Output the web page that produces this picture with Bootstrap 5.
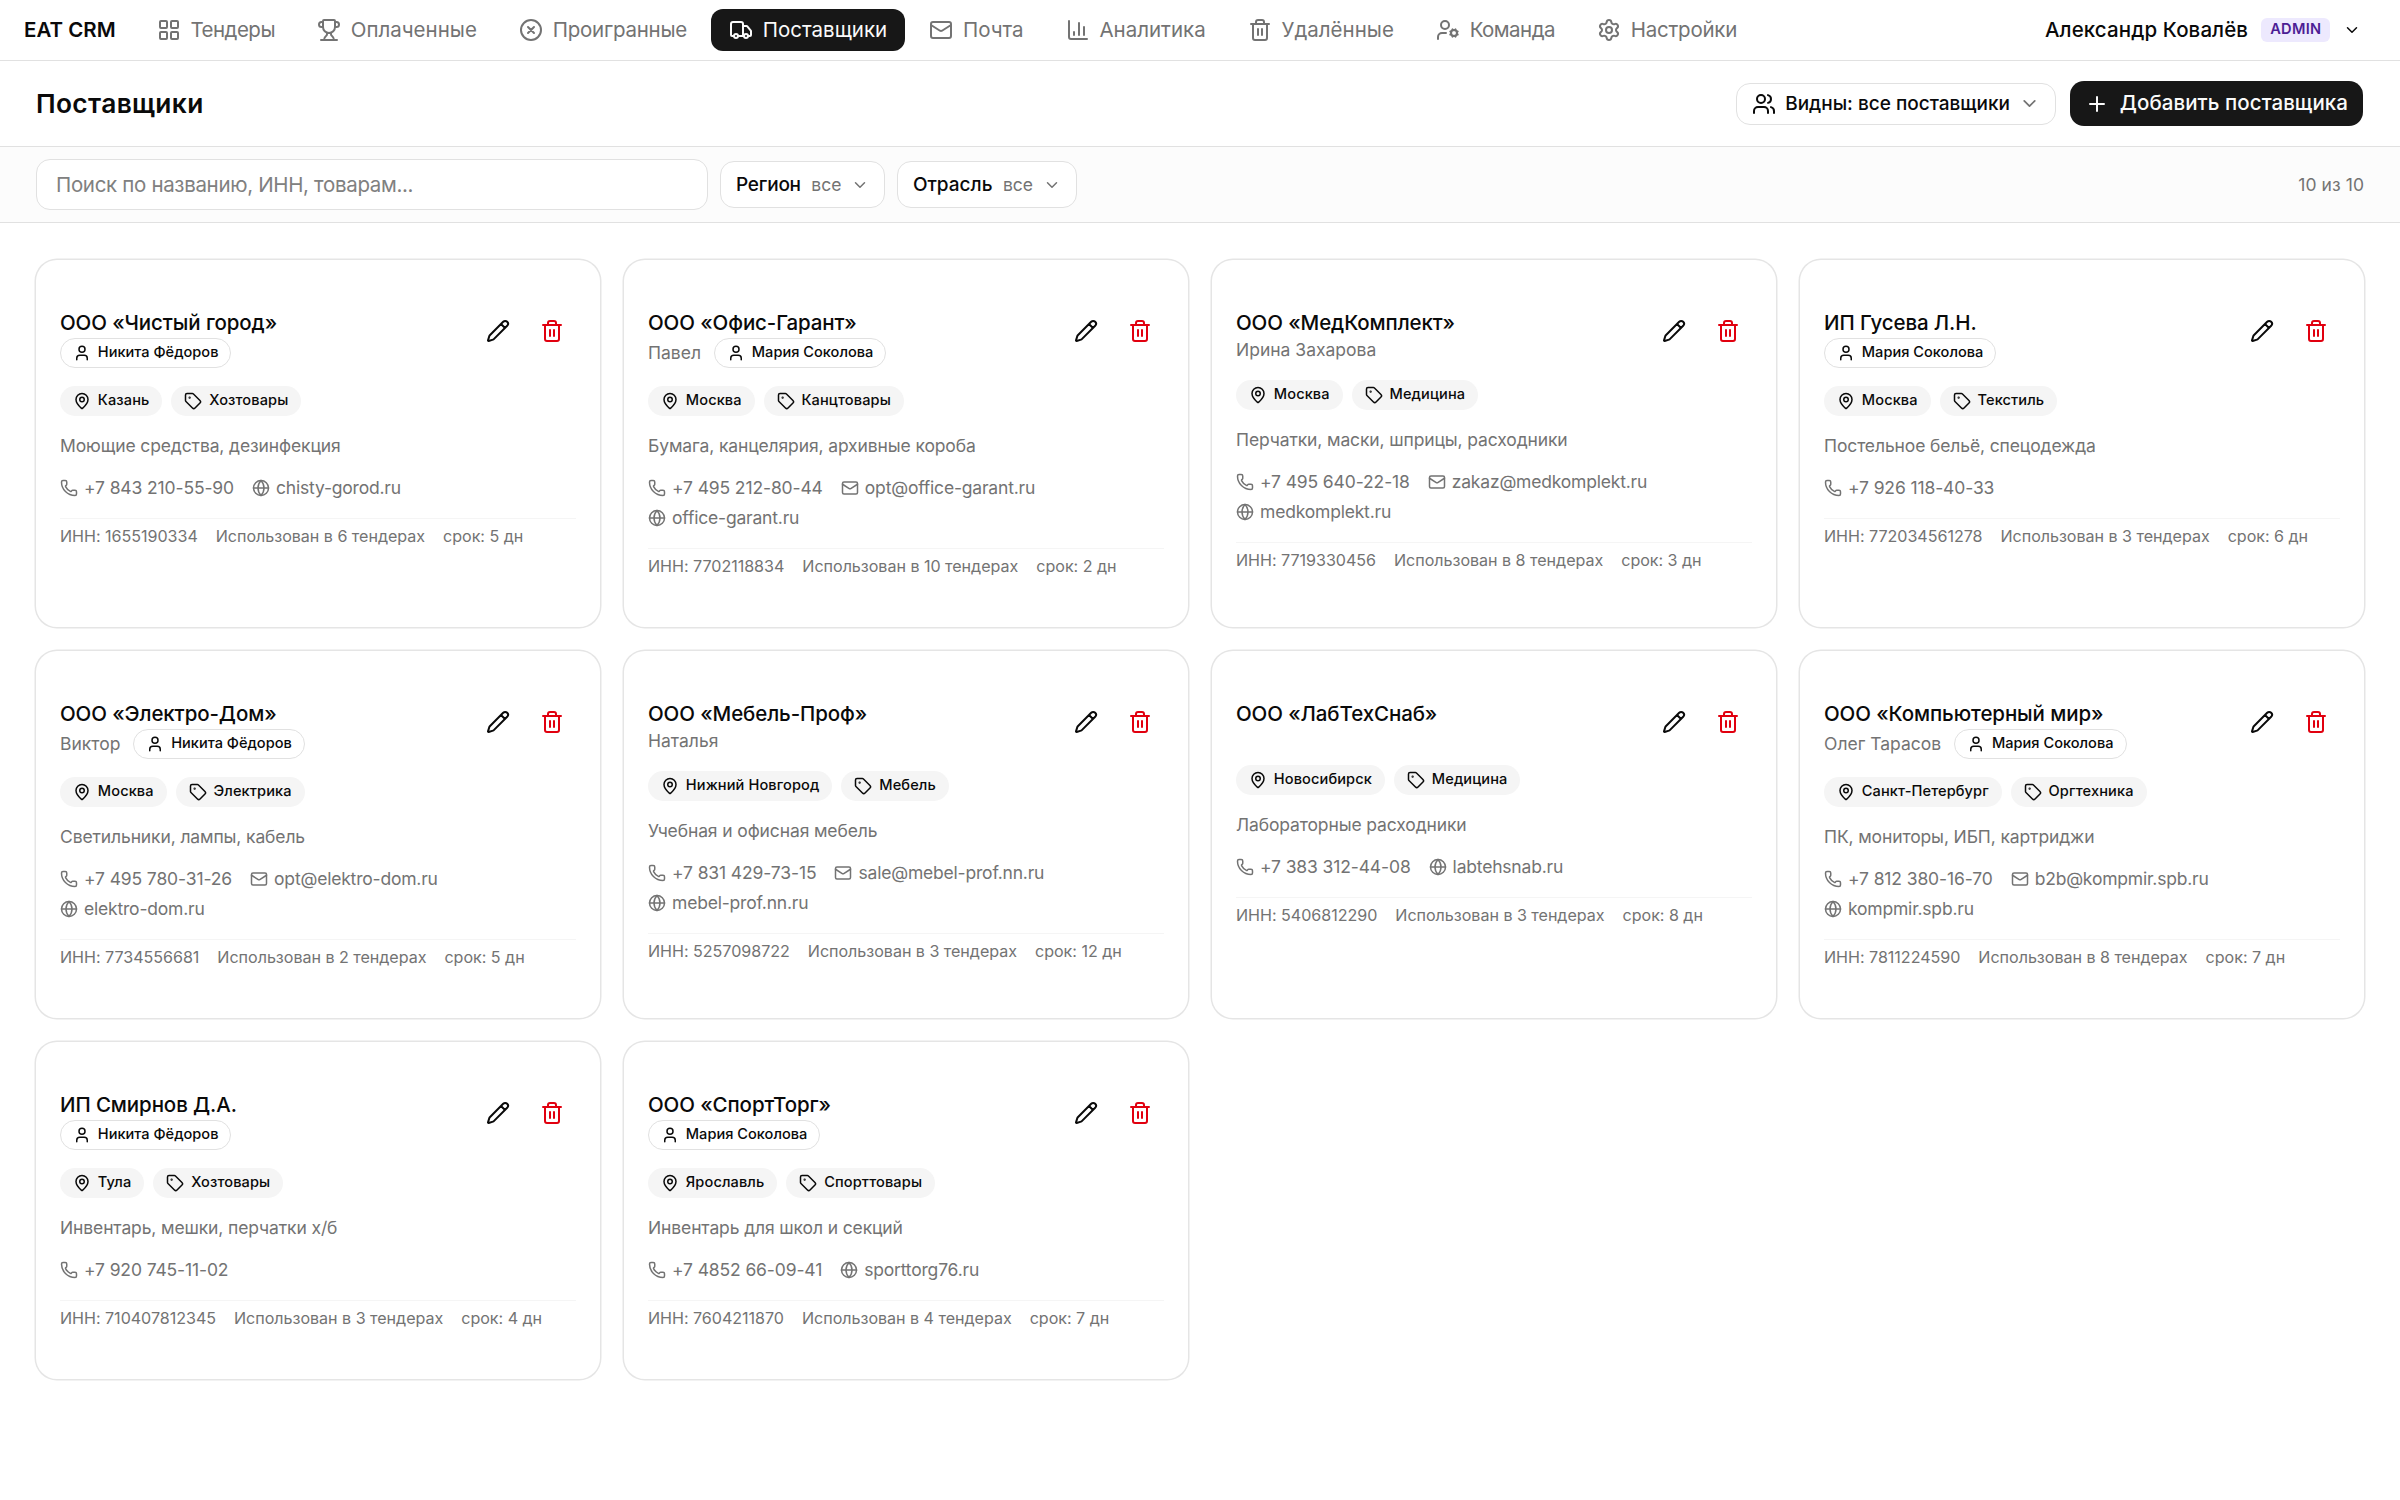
<!DOCTYPE html>
<html lang="ru">
<head>
<meta charset="utf-8">
<meta name="viewport" content="width=device-width, initial-scale=1">
<title>Поставщики — EAT CRM</title>
<link href="https://cdn.jsdelivr.net/npm/bootstrap@5.3.0/dist/css/bootstrap.min.css" rel="stylesheet">
<style>
:root{--ink:#0a0a0a;--muted:#737373;--line:#e1e1e1;--soft:#f5f5f5;--dark:#171717}
body{font-family:Inter,"Liberation Sans",sans-serif;color:var(--ink);background:#fff;font-size:20.5px;line-height:30px}
.ico{width:24px;height:24px;flex:none;fill:none;stroke:currentColor;stroke-width:2;stroke-linecap:round;stroke-linejoin:round}
.ico-sm{width:18px;height:18px}
.ico-md{width:21px;height:21px}
.dim{color:var(--muted)}

/* top navigation */
.topbar{height:61px;padding:0 24px;border-bottom:1px solid var(--line)}
.brand-name{font-weight:600;width:115px}
.topbar .nav{gap:6px}
.topbar .nav-link{display:flex;align-items:center;gap:9.5px;height:42px;padding:0 18.3px 0 18px;border-radius:12px;color:var(--muted);white-space:nowrap}
.topbar .nav-link.active{background:var(--dark);color:#fafafa}
.ls-1{letter-spacing:-.012em}
.ls-2{letter-spacing:-.026em}
.account{gap:13px;padding-right:15px;font-weight:500;letter-spacing:.005em}
.role{background:#ede9fe;color:#4c1d95;border-radius:6px;height:24px;line-height:23px;padding:0 8.5px 0 9px;font-size:14.6px;font-weight:600;letter-spacing:.022em}

/* page header and filters */
.pagehead{height:86px;padding:0 37px 0 36px;gap:14px;border-bottom:1px solid var(--line)}
.pagehead h1{font-size:26.3px;font-weight:600;letter-spacing:.014em;line-height:36px}
.ctl{display:inline-flex;align-items:center;border:1px solid var(--line);border-radius:14px;background:#fff;color:var(--ink);font-size:19px;font-weight:500;padding:0 15px;white-space:nowrap}
.ctl-view{height:42px;gap:9px}
.ctl-filter{height:47px;gap:9.5px}
.ctl-filter small{font-size:17.5px;font-weight:400;color:var(--muted);margin-left:1px}
.btn-add{display:inline-flex;align-items:center;justify-content:space-between;width:293px;height:45px;padding:0 15px;border:0;border-radius:14px;background:var(--dark);color:#fafafa;font-size:20.5px;font-weight:500;letter-spacing:.003em}
.btn-add:hover{background:#333;color:#fff}
.filters{height:76px;padding:0 36px;gap:12px;background:#fcfcfc;border-bottom:1px solid var(--line)}
.filters .form-control{width:672px;height:51px;padding:0 19px;border:1px solid var(--line);border-radius:14px;font-size:20.5px;letter-spacing:-.016em;color:var(--ink)}
.filters .form-control::placeholder{color:#808080;opacity:1}
.total{font-size:17.5px;letter-spacing:.004em}

/* supplier cards */
.suppliers{display:grid;grid-template-columns:repeat(4,1fr);gap:24px;padding:36.5px 36px}
.supplier{display:flex;flex-direction:column;gap:18px;border-radius:21px;padding:48px 24px;box-shadow:0 0 0 1.5px #e5e5e5;background:#fff}
.supplier h2{font-size:20.5px;font-weight:500;line-height:30px;letter-spacing:-.005em;margin:0}
.person{font-size:17.5px;line-height:24px;gap:13px;color:var(--muted)}
.heading{min-height:48px}
.acts{gap:6px}
.act{width:48px;height:48px;padding:0 0 1px;border:0;color:var(--ink);display:flex;align-items:center;justify-content:center}
.act-del{color:#e1000f}
.pills{gap:9px}
.pill{display:inline-flex;align-items:center;gap:6.8px;height:30px;padding:0 13px;border-radius:15px;background:var(--soft);color:var(--ink);font-size:14.6px;font-weight:500;letter-spacing:.007em;white-space:nowrap}
.pill span{line-height:28px;padding-bottom:1px}
.pill-owner{background:#fff;border:1px solid var(--line);padding:0 12px;letter-spacing:0}
.body-line{font-size:17.5px;line-height:24px;letter-spacing:-.007em;color:var(--muted)}
.contacts{row-gap:6px;column-gap:18px}
.contacts>span{display:inline-flex;align-items:center;gap:6px}
.net{letter-spacing:-.011em}
.facts{border-top:1px solid var(--soft);padding-top:5.5px;gap:18px;font-size:16.1px;line-height:24.5px;letter-spacing:-.002em;color:var(--muted)}
</style>
</head>
<body>
<svg width="0" height="0" class="position-absolute" aria-hidden="true">
<symbol id="i-grid" viewBox="0 0 24 24"><rect x="3" y="3" width="7" height="7" rx="1"/><rect x="14" y="3" width="7" height="7" rx="1"/><rect x="14" y="14" width="7" height="7" rx="1"/><rect x="3" y="14" width="7" height="7" rx="1"/></symbol>
<symbol id="i-trophy" viewBox="0 0 24 24"><path d="M10 14.66v1.626a2 2 0 0 1-.976 1.696A5 5 0 0 0 7 21.978M14 14.66v1.626a2 2 0 0 0 .976 1.696A5 5 0 0 1 17 21.978M18 9h1.5a1 1 0 0 0 0-5H18M4 22h16M6 9a6 6 0 0 0 12 0V3a1 1 0 0 0-1-1H7a1 1 0 0 0-1 1zM6 9H4.5a1 1 0 0 1 0-5H6"/></symbol>
<symbol id="i-lost" viewBox="0 0 24 24"><circle cx="12" cy="12" r="10"/><path d="m15 9-6 6M9 9l6 6"/></symbol>
<symbol id="i-truck" viewBox="0 0 24 24"><path d="M14 18V6a2 2 0 0 0-2-2H4a2 2 0 0 0-2 2v11a1 1 0 0 0 1 1h2M15 18H9M19 18h2a1 1 0 0 0 1-1v-3.65a1 1 0 0 0-.22-.624l-3.48-4.35A1 1 0 0 0 17.52 8H14"/><circle cx="17" cy="18" r="2"/><circle cx="7" cy="18" r="2"/></symbol>
<symbol id="i-mail" viewBox="0 0 24 24"><path d="m22 7-8.991 5.727a2 2 0 0 1-2.009 0L2 7"/><rect x="2" y="4" width="20" height="16" rx="2"/></symbol>
<symbol id="i-chart" viewBox="0 0 24 24"><path d="M3 3v16a2 2 0 0 0 2 2h16M18 17V9M13 17V5M8 17v-3"/></symbol>
<symbol id="i-trash" viewBox="0 0 24 24"><path d="M10 11v6M14 11v6M19 6v14a2 2 0 0 1-2 2H7a2 2 0 0 1-2-2V6M3 6h18M8 6V4a2 2 0 0 1 2-2h4a2 2 0 0 1 2 2v2"/></symbol>
<symbol id="i-team" viewBox="0 0 24 24"><path d="M10 15H6a4 4 0 0 0-4 4v2M14.305 16.53l.923-.382M15.228 13.852l-.923-.383M16.852 12.228l-.383-.923M16.852 17.772l-.383.924M19.148 12.228l.383-.923M19.53 18.696l-.382-.924M20.772 13.852l.924-.383M20.772 16.148l.924.383"/><circle cx="18" cy="15" r="3"/><circle cx="9" cy="7" r="4"/></symbol>
<symbol id="i-gear" viewBox="0 0 24 24"><path d="M9.671 4.136a2.34 2.34 0 0 1 4.659 0 2.34 2.34 0 0 0 3.319 1.915 2.34 2.34 0 0 1 2.33 4.033 2.34 2.34 0 0 0 0 3.831 2.34 2.34 0 0 1-2.33 4.033 2.34 2.34 0 0 0-3.319 1.915 2.34 2.34 0 0 1-4.659 0 2.34 2.34 0 0 0-3.32-1.915 2.34 2.34 0 0 1-2.33-4.033 2.34 2.34 0 0 0 0-3.831A2.34 2.34 0 0 1 6.35 6.051a2.34 2.34 0 0 0 3.319-1.915"/><circle cx="12" cy="12" r="3"/></symbol>
<symbol id="i-down" viewBox="0 0 24 24"><path d="m6 9 6 6 6-6"/></symbol>
<symbol id="i-plus" viewBox="0 0 24 24"><path d="M5 12h14M12 5v14"/></symbol>
<symbol id="i-users" viewBox="0 0 24 24"><path d="M16 21v-2a4 4 0 0 0-4-4H6a4 4 0 0 0-4 4v2M16 3.128a4 4 0 0 1 0 7.744M22 21v-2a4 4 0 0 0-3-3.87"/><circle cx="9" cy="7" r="4"/></symbol>
<symbol id="i-user" viewBox="0 0 24 24"><path d="M19 21v-2a4 4 0 0 0-4-4H9a4 4 0 0 0-4 4v2"/><circle cx="12" cy="7" r="4"/></symbol>
<symbol id="i-pin" viewBox="0 0 24 24"><path d="M20 10c0 4.993-5.539 10.193-7.399 11.799a1 1 0 0 1-1.202 0C9.539 20.193 4 14.993 4 10a8 8 0 0 1 16 0"/><circle cx="12" cy="10" r="3"/></symbol>
<symbol id="i-tag" viewBox="0 0 24 24"><path d="M12.586 2.586A2 2 0 0 0 11.172 2H4a2 2 0 0 0-2 2v7.172a2 2 0 0 0 .586 1.414l8.704 8.704a2.426 2.426 0 0 0 3.42 0l6.58-6.58a2.426 2.426 0 0 0 0-3.42z"/><circle cx="7.5" cy="7.5" r=".5" fill="currentColor"/></symbol>
<symbol id="i-phone" viewBox="0 0 24 24"><path d="M13.832 16.568a1 1 0 0 0 1.213-.303l.355-.465A2 2 0 0 1 17 15h3a2 2 0 0 1 2 2v3a2 2 0 0 1-2 2A18 18 0 0 1 2 4a2 2 0 0 1 2-2h3a2 2 0 0 1 2 2v3a2 2 0 0 1-.8 1.6l-.468.351a1 1 0 0 0-.292 1.233 14 14 0 0 0 6.392 6.384"/></symbol>
<symbol id="i-globe" viewBox="0 0 24 24"><circle cx="12" cy="12" r="10"/><path d="M12 2a14.5 14.5 0 0 0 0 20 14.5 14.5 0 0 0 0-20M2 12h20"/></symbol>
<symbol id="i-pencil" viewBox="0 0 24 24"><path d="M21.174 6.812a1 1 0 0 0-3.986-3.987L3.842 16.174a2 2 0 0 0-.5.83l-1.321 4.352a.5.5 0 0 0 .623.622l4.353-1.32a2 2 0 0 0 .83-.497zM15 5l4 4"/></symbol>
</svg>

<header class="topbar d-flex align-items-center">
  <div class="brand-name">EAT CRM</div>
  <nav class="nav flex-nowrap">
    <a class="nav-link ls-2" href="#"><svg class="ico"><use href="#i-grid"/></svg>Тендеры</a>
    <a class="nav-link" href="#"><svg class="ico"><use href="#i-trophy"/></svg>Оплаченные</a>
    <a class="nav-link ls-1" href="#"><svg class="ico"><use href="#i-lost"/></svg>Проигранные</a>
    <a class="nav-link active" href="#"><svg class="ico"><use href="#i-truck"/></svg>Поставщики</a>
    <a class="nav-link" href="#"><svg class="ico"><use href="#i-mail"/></svg>Почта</a>
    <a class="nav-link" href="#"><svg class="ico"><use href="#i-chart"/></svg>Аналитика</a>
    <a class="nav-link" href="#"><svg class="ico"><use href="#i-trash"/></svg>Удалённые</a>
    <a class="nav-link ls-2" href="#"><svg class="ico"><use href="#i-team"/></svg>Команда</a>
    <a class="nav-link ls-1" href="#"><svg class="ico"><use href="#i-gear"/></svg>Настройки</a>
  </nav>
  <div class="account d-flex align-items-center ms-auto">
    <span>Александр Ковалёв</span>
    <span class="role">ADMIN</span>
    <svg class="ico ico-sm"><use href="#i-down"/></svg>
  </div>
</header>

<section class="pagehead d-flex align-items-center">
  <h1 class="m-0 me-auto">Поставщики</h1>
  <button class="ctl ctl-view" type="button"><svg class="ico"><use href="#i-users"/></svg>Видны: все поставщики<svg class="ico ico-md dim"><use href="#i-down"/></svg></button>
  <button class="btn btn-add" type="button"><svg class="ico"><use href="#i-plus"/></svg>Добавить поставщика</button>
</section>

<section class="filters d-flex align-items-center">
  <input class="form-control" type="search" placeholder="Поиск по названию, ИНН, товарам..." aria-label="Поиск">
  <button class="ctl ctl-filter" type="button"><span class="ls-1">Регион</span><small>все</small><svg class="ico ico-sm dim"><use href="#i-down"/></svg></button>
  <button class="ctl ctl-filter" type="button"><span>Отрасль</span><small>все</small><svg class="ico ico-sm dim"><use href="#i-down"/></svg></button>
  <span class="total dim ms-auto">10 из 10</span>
</section>

<main class="suppliers" id="suppliers"></main>

<script src="https://cdn.jsdelivr.net/npm/bootstrap@5.3.0/dist/js/bootstrap.bundle.min.js"></script>
<script>
const NF = 'Никита Фёдоров', MS = 'Мария Соколова';
const suppliers = [
  {name:'ООО «Чистый город»', owner:NF, city:'Казань', field:'Хозтовары', goods:'Моющие средства, дезинфекция', phone:'+7 843 210-55-90', site:'chisty-gorod.ru', inn:'1655190334', used:6, days:5},
  {name:'ООО «Офис-Гарант»', person:'Павел', owner:MS, city:'Москва', field:'Канцтовары', goods:'Бумага, канцелярия, архивные короба', phone:'+7 495 212-80-44', mail:'opt@office-garant.ru', site:'office-garant.ru', inn:'7702118834', used:10, days:2},
  {name:'ООО «МедКомплект»', person:'Ирина Захарова', city:'Москва', field:'Медицина', goods:'Перчатки, маски, шприцы, расходники', phone:'+7 495 640-22-18', mail:'zakaz@medkomplekt.ru', site:'medkomplekt.ru', inn:'7719330456', used:8, days:3},
  {name:'ИП Гусева Л.Н.', owner:MS, city:'Москва', field:'Текстиль', goods:'Постельное бельё, спецодежда', phone:'+7 926 118-40-33', inn:'772034561278', used:3, days:6},
  {name:'ООО «Электро-Дом»', person:'Виктор', owner:NF, city:'Москва', field:'Электрика', goods:'Светильники, лампы, кабель', phone:'+7 495 780-31-26', mail:'opt@elektro-dom.ru', site:'elektro-dom.ru', inn:'7734556681', used:2, days:5},
  {name:'ООО «Мебель-Проф»', person:'Наталья', city:'Нижний Новгород', field:'Мебель', goods:'Учебная и офисная мебель', phone:'+7 831 429-73-15', mail:'sale@mebel-prof.nn.ru', site:'mebel-prof.nn.ru', inn:'5257098722', used:3, days:12},
  {name:'ООО «ЛабТехСнаб»', city:'Новосибирск', field:'Медицина', goods:'Лабораторные расходники', phone:'+7 383 312-44-08', site:'labtehsnab.ru', inn:'5406812290', used:3, days:8},
  {name:'ООО «Компьютерный мир»', person:'Олег Тарасов', owner:MS, city:'Санкт-Петербург', field:'Оргтехника', goods:'ПК, мониторы, ИБП, картриджи', phone:'+7 812 380-16-70', mail:'b2b@kompmir.spb.ru', site:'kompmir.spb.ru', inn:'7811224590', used:8, days:7},
  {name:'ИП Смирнов Д.А.', owner:NF, city:'Тула', field:'Хозтовары', goods:'Инвентарь, мешки, перчатки х/б', phone:'+7 920 745-11-02', inn:'710407812345', used:3, days:4},
  {name:'ООО «СпортТорг»', owner:MS, city:'Ярославль', field:'Спорттовары', goods:'Инвентарь для школ и секций', phone:'+7 4852 66-09-41', site:'sporttorg76.ru', inn:'7604211870', used:4, days:7}
];
const ico = (n, c = '') => `<svg class="ico ${c}"><use href="#i-${n}"/></svg>`;
const pill = (n, t, c = '') => `<span class="pill ${c}">${ico(n, 'ico-sm')}<span>${t}</span></span>`;
const contact = (n, t, c = '') => t ? `<span class="${c}">${ico(n, 'ico-sm')}${t}</span>` : '';
document.getElementById('suppliers').innerHTML = suppliers.map(s => `
  <article class="supplier">
    <div class="heading d-flex align-items-start">
      <div class="me-auto">
        <h2>${s.name}</h2>
        <div class="person d-flex align-items-center">${s.person ? `<span>${s.person}</span>` : ''}${s.owner ? pill('user', s.owner, 'pill-owner') : ''}</div>
      </div>
      <div class="acts d-flex">
        <button class="btn act" type="button" aria-label="Изменить">${ico('pencil')}</button>
        <button class="btn act act-del" type="button" aria-label="Удалить">${ico('trash')}</button>
      </div>
    </div>
    <div class="pills d-flex">${pill('pin', s.city)}${pill('tag', s.field)}</div>
    <div class="body-line">${s.goods}</div>
    <div class="body-line contacts d-flex flex-wrap">${contact('phone', s.phone)}${contact('mail', s.mail, 'net')}${contact('globe', s.site, 'net')}</div>
    <div class="facts d-flex"><span>ИНН: ${s.inn}</span><span>Использован в ${s.used} тендерах</span><span>срок: ${s.days} дн</span></div>
  </article>`).join('');
</script>
</body>
</html>
